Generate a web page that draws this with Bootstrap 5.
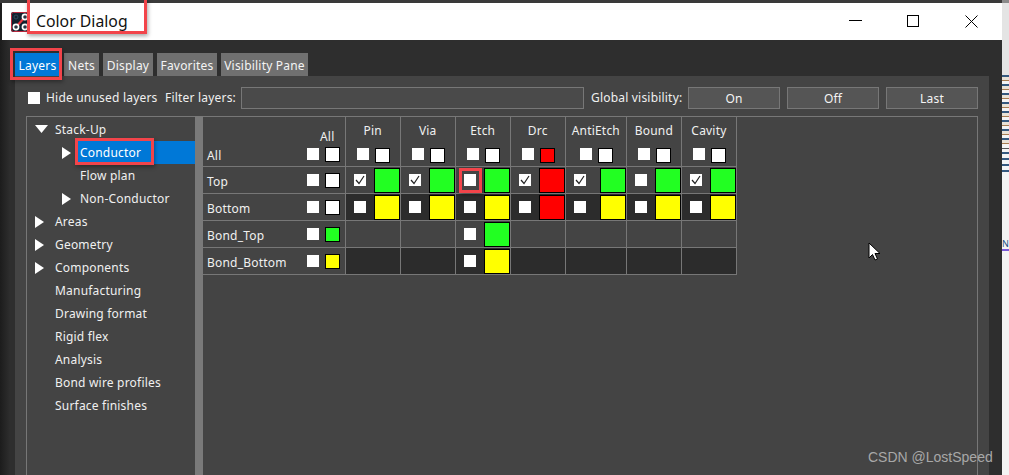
<!DOCTYPE html>
<html lang="en">
<head>
<meta charset="utf-8">
<title>Color Dialog</title>
<link href="https://cdn.jsdelivr.net/npm/bootstrap@5.3.0/dist/css/bootstrap.min.css" rel="stylesheet">
<style>
html,body{height:100%;overflow:hidden}
body{background:#fff;font-family:"Noto Sans",sans-serif;font-size:12px;letter-spacing:.2px;color:#f0f0f0;line-height:1}
.scene{position:relative;width:1009px;height:475px;overflow:hidden}
.topstrip{height:3px;background:linear-gradient(to right,#3a3a3a 1002px,#8a8a8a 1002px)}
.shell{height:472px}
.win{width:1002px;height:472px;padding-left:2px;background:linear-gradient(to right,#1c1c1c,#2e2e2e 10px)}
.rightedge{width:7px;background:#f4f4f4;overflow:hidden}
.re-gap1{height:72px;background:#e4e4e4}
.re-noise{height:72px;background:repeating-linear-gradient(#35597f 0 2px,#e9e2d6 2px 5px,#a87c50 5px 6px,#f4f4f4 6px 9px)}
.re-line{height:1px;background:#555;margin:1px 0 3px}
.re-noise2{height:22px;background:repeating-linear-gradient(#35597f 0 2px,#f4f4f4 2px 6px)}
.re-gap2{height:65px}
.re-n{color:#1c4f80;font-size:9px;height:10px;letter-spacing:0;line-height:10px}
.re-under{height:2px;background:#7a5ad8}
.titlebar{height:37px;background:#fff;color:#111;padding-left:9px}
.titletext{font-size:15.8px;letter-spacing:0;margin-left:6px}
.wbtns{margin-left:auto;width:153px;padding-right:24px}
.tabsrow{height:36px;padding:13px 0 0 13px;gap:4px}
.wtab{height:23px;padding:2px 0 0;background:#707070;color:#f4f4f4;display:flex;align-items:center;justify-content:center}
.wtab.on{background:#0078d7;color:#fff}
.w-a{width:45px}.w-b{width:35px}.w-c{width:50px}.w-d{width:60px}.w-e{width:87px}
.pane{width:974px;margin-left:13px;height:399px;background:#444;padding:0 11px}
.tools{height:40px;padding-top:11px;align-items:flex-start}
.tools .lbl{margin-top:5px;white-space:nowrap;flex:none}
.cb{width:12px;height:12px;background:#fff;flex:none;display:inline-flex;align-items:center;justify-content:center}
.cb-main{margin:5px 6px 0 2px}
.l-a{width:119px}.l-b{width:76px}.l-c{width:97px;margin-left:7px}
.filter{width:343px;height:22px;border:1px solid #777;background:#4a4a4a}
.gbtn{width:92px;height:22px;border:1px solid #777;background:#555;color:#f4f4f4;font-size:12px;letter-spacing:.2px;padding:1px 0 0;display:flex;align-items:center;justify-content:center;border-radius:0;flex:none}
.gbtn+.gbtn{margin-left:7px}
.tree{width:169px;flex:none;border:1px solid #777;border-right:0;border-bottom:0;padding-top:1px;height:359px}
.tr{height:23px;display:flex;align-items:center;padding-left:28px;position:relative}
.tr.l2{padding-left:53px}
.tr.sel{background:linear-gradient(to right,transparent 49px,#0078d7 49px);color:#fff}
.arrow{position:absolute;left:8px;top:6px}
.l2 .arrow{left:35px}
.split{width:8px;flex:none;background:#7a7a7a}
.gridwrap{flex:1;border-top:1px solid #777;border-right:1px solid #777;height:359px}
.mtx{border-collapse:collapse;table-layout:fixed;width:534px;color:#f0f0f0}
.mtx td{padding:0;border:1px solid #777;height:27px;vertical-align:middle}
.mtx tr:first-child td{border-top:0;height:49px}
.mtx td:first-child{border-left:0}
.dk{background:#2c2c2c}
.cell{display:flex;align-items:center;justify-content:space-between;height:26px;padding-left:8px}
.big{width:26px;height:25px;border:1px solid #000;flex:none}
.sm{width:15px;height:15px;border:1px solid #000;flex:none}
.g{background:#22ff22}.y{background:#ffff00}.r{background:#ff0000}.w{background:#fff}
.hd{height:49px;text-align:center;padding:8px 0 0}
.hdrow{gap:6px;margin-top:11px;padding-left:2px;justify-content:center}
.lab{display:flex;align-items:center;height:26px;padding-left:4px}
.labtxt{padding-top:3px}
.labend{margin-left:auto;display:flex;align-items:center;gap:6px;padding-right:5px}
.lab0{height:49px;position:relative}
.lab0 .al{position:absolute;left:117px;top:14px}
.lab0 .lab{position:absolute;left:0;right:0;bottom:-1px}
.anno{position:absolute;border:3px solid #f2444a;box-shadow:1px 2px 4px rgba(0,0,0,.35);pointer-events:none}
.cursor{position:absolute;left:868px;top:242px}
.wm{position:absolute;left:868px;top:450px;font-family:"Liberation Sans",sans-serif;font-size:14px;letter-spacing:0;color:#a8a8a8;line-height:1}
</style>
</head>
<body>
<div class="scene">
  <div class="topstrip"></div>
  <div class="shell d-flex">
    <div class="win">
      <div class="titlebar d-flex align-items-center">
        <svg width="19" height="20" viewBox="0 0 19 20"><rect width="19" height="20" rx="2" fill="#12202e"/><rect x=".5" y=".5" width="18" height="19" rx="2" fill="none" stroke="#b5263c"/><path d="M5 15L14 5" stroke="#e8353f" stroke-width="2.2"/><circle cx="5" cy="5" r="2" fill="#12202e" stroke="#33465a"/><circle cx="14" cy="5" r="2.6" fill="#2a3644" stroke="#fff" stroke-width="1.6"/><circle cx="5" cy="15" r="2.6" fill="#2a3644" stroke="#fff" stroke-width="1.6"/><circle cx="14" cy="15" r="2.6" fill="#2a3644" stroke="#fff" stroke-width="1.6"/></svg>
        <span class="titletext">Color Dialog</span>
        <div class="wbtns d-flex justify-content-between align-items-center">
          <svg width="13" height="13" viewBox="0 0 13 13"><path d="M0 5.5H13" stroke="#000"/></svg>
          <svg width="13" height="13" viewBox="0 0 13 13"><rect x=".5" y=".5" width="11" height="11" fill="none" stroke="#000"/></svg>
          <svg width="13" height="13" viewBox="0 0 13 13"><path d="M.5.5L12.5 12.5M12.5.5L.5 12.5" stroke="#000"/></svg>
        </div>
      </div>
      <div class="tabsrow d-flex">
        <div class="wtab on w-a">Layers</div><div class="wtab w-b">Nets</div><div class="wtab w-c">Display</div><div class="wtab w-d">Favorites</div><div class="wtab w-e">Visibility Pane</div>
      </div>
      <div class="pane">
        <div class="tools d-flex">
          <span class="cb cb-main"></span>
          <span class="lbl l-a">Hide unused layers</span>
          <span class="lbl l-b">Filter layers:</span>
          <div class="filter"></div>
          <span class="lbl l-c">Global visibility:</span>
          <button class="gbtn">On</button>
          <button class="gbtn">Off</button>
          <button class="gbtn">Last</button>
        </div>
        <div class="d-flex">
          <div class="tree">
            <div class="tr"><svg class="arrow" width="13" height="10" viewBox="0 0 13 10"><path d="M0 1H13L6.5 9Z" fill="#fff"/></svg>Stack-Up</div>
            <div class="tr l2 sel"><svg class="arrow" width="9" height="12" viewBox="0 0 9 12"><path d="M0 0L9 6L0 12Z" fill="#fff"/></svg>Conductor</div>
            <div class="tr l2">Flow plan</div>
            <div class="tr l2"><svg class="arrow" width="9" height="12" viewBox="0 0 9 12"><path d="M0 0L9 6L0 12Z" fill="#fff"/></svg>Non-Conductor</div>
            <div class="tr"><svg class="arrow" width="9" height="12" viewBox="0 0 9 12"><path d="M0 0L9 6L0 12Z" fill="#fff"/></svg>Areas</div>
            <div class="tr"><svg class="arrow" width="9" height="12" viewBox="0 0 9 12"><path d="M0 0L9 6L0 12Z" fill="#fff"/></svg>Geometry</div>
            <div class="tr"><svg class="arrow" width="9" height="12" viewBox="0 0 9 12"><path d="M0 0L9 6L0 12Z" fill="#fff"/></svg>Components</div>
            <div class="tr">Manufacturing</div>
            <div class="tr">Drawing format</div>
            <div class="tr">Rigid flex</div>
            <div class="tr">Analysis</div>
            <div class="tr">Bond wire profiles</div>
            <div class="tr">Surface finishes</div>
          </div>
          <div class="split"></div>
          <div class="gridwrap">
            <table class="mtx">
              <colgroup><col style="width:142px"><col style="width:55px"><col style="width:55px"><col style="width:55px"><col style="width:55px"><col style="width:61px"><col style="width:55px"><col style="width:55px"></colgroup>
              <tbody id="mb"></tbody>
            </table>
          </div>
        </div>
      </div>
    </div>
    <div class="rightedge">
      <div class="re-gap1"></div>
      <div class="re-noise"></div>
      <div class="re-line"></div>
      <div class="re-noise2"></div>
      <div class="re-gap2"></div>
      <div class="re-n">N</div>
      <div class="re-under"></div>
    </div>
  </div>
  <div class="anno" style="left:27px;top:-3px;width:120px;height:37px"></div>
  <div class="anno" style="left:10px;top:48px;width:52px;height:32px"></div>
  <div class="anno" style="left:75px;top:138px;width:79px;height:27px"></div>
  <div class="anno" style="left:459px;top:168px;width:23px;height:25px"></div>
  <svg class="cursor" width="13" height="20" viewBox="0 0 13 20"><path d="M1 1V16L4.5 12.5L7 18L9.5 17L7 11.5H12Z" fill="#fff" stroke="#000"/></svg>
  <div class="wm">CSDN @LostSpeed</div>
</div>
<script>
var check='<svg width="10" height="10" viewBox="0 0 10 10"><path d="M1 5L4 8.5L9 1" fill="none" stroke="#222" stroke-width="1.2"/></svg>';
var cols=['Pin','Via','Etch','Drc','AntiEtch','Bound','Cavity'];
var hdc=['w','w','w','r','w','w','w'];
var top_=[1,1,0,1,1,0,1], topc=['g','g','g','r','g','g','g'], botc=['y','y','y','r','y','y','y'];
var h='<tr><td><div class="lab0"><span class="al">All</span><div class="lab"><span class="labtxt">All</span><span class="labend"><span class="cb"></span><span class="sm w"></span></span></div></div></td>';
cols.forEach(function(c,i){h+='<td><div class="hd">'+c+'<div class="d-flex hdrow"><span class="cb"></span><span class="sm '+hdc[i]+'"></span></div></div></td>';});
h+='</tr>';
function lab(t,c){return '<td><div class="lab"><span class="labtxt">'+t+'</span><span class="labend"><span class="cb"></span><span class="sm '+c+'"></span></span></div></td>';}
function cell(on,c,d){return '<td class="'+(d?'dk':'')+'"><div class="cell"><span class="cb">'+(on?check:'')+'</span><span class="big '+c+'"></span></div></td>';}
h+='<tr>'+lab('Top','w');cols.forEach(function(c,i){h+=cell(top_[i],topc[i],0);});h+='</tr>';
h+='<tr>'+lab('Bottom','w');cols.forEach(function(c,i){h+=cell(0,botc[i],1);});h+='</tr>';
h+='<tr>'+lab('Bond_Top','g');cols.forEach(function(c,i){h+=i==2?cell(0,'g',0):'<td></td>';});h+='</tr>';
h+='<tr>'+lab('Bond_Bottom','y');cols.forEach(function(c,i){h+=i==2?cell(0,'y',1):'<td class="dk"></td>';});h+='</tr>';
document.getElementById('mb').innerHTML=h;
</script>
<script src="https://cdn.jsdelivr.net/npm/bootstrap@5.3.0/dist/js/bootstrap.bundle.min.js"></script>
</body>
</html>
